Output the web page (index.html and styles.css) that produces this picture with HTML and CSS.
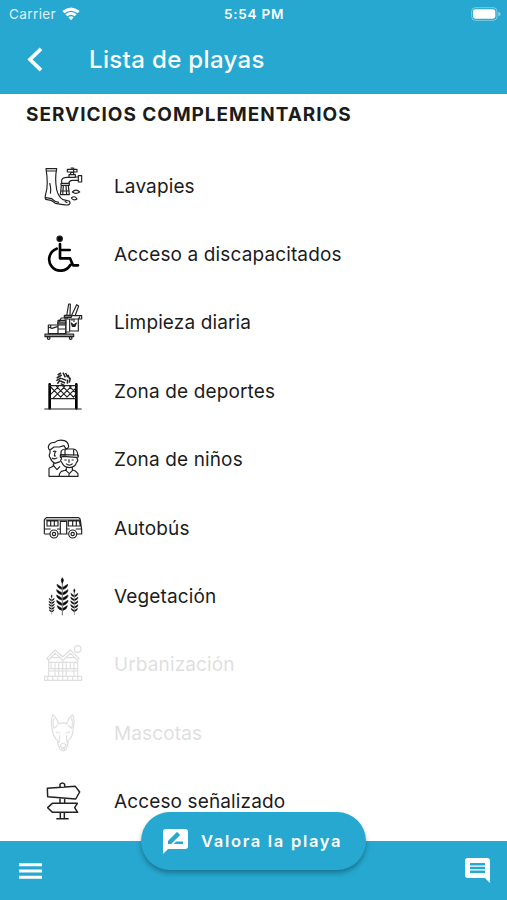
FILE: index.html
```html
<!doctype html>
<html lang="es">
  <head>
    <meta charset="UTF-8" />
    <meta name="viewport" content="width=device-width, initial-scale=1" />
    <title>Lista de playas</title>
    <link rel="stylesheet" href="styles.css">
  </head>
  <body>
    <div class="app">
      <header class="header">
        <div class="status">
          <div class="carrier">
            <span>Carrier</span>
            <svg class="wifi" viewBox="0 0 54 42">
              <path d="M1 12Q27-9 53 12L47 19Q27 3 7 19Z" />
              <path d="M10 22Q27 8 44 22L38 28Q27 19 16 28Z" />
              <path d="M19 31Q27 24 35 31L27 40Z" />
            </svg>
          </div>
          <span class="time">5:54 PM</span>
          <div class="battery-box">
            <svg class="battery" viewBox="0 0 90 42">
              <rect class="battery-case" x="2" y="2" width="76" height="38" rx="11" />
              <rect x="6" y="7" width="67" height="28" rx="7" />
              <path class="battery-tip" d="M82 14q7 2 7 7t-7 7z" />
            </svg>
          </div>
        </div>
        <div class="title-bar">
          <svg class="back" viewBox="0 0 48 74"><path d="M42 5L9 37L42 69" /></svg>
          <h1>Lista de playas</h1>
        </div>
      </header>

      <main class="content">
        <h2>SERVICIOS COMPLEMENTARIOS</h2>
        <ul class="services">
          <li>
            <svg class="icon" viewBox="39 31 120 120">
              <path d="M48 39H80Q74 70 80 102Q85 124 99 132L117 136Q122 140 119 145Q114 150 99 147L76 143L63 134L47 131Q44 127 47 115Q56 90 48 39ZM49 46H79M59 82Q64 99 61 114M47 126L65 129Q74 139 87 140M104 137L112 141" />
              <path d="M95 83V73Q98 65 111 65H117V57H136V64H145V60H155V79H145V74H126Q118 75 116 83ZM145 64V74M122 57V50H131V57M112 41H141V49H112ZM122 37H131V53M93 83H118V89H93ZM94 90L91 117H118L115 90M100 90L98 116M108 90L110 116M91 106H119M116 65H137" />
              <path d="M127 109Q138 98 149 109Q137 117 127 109ZM124 127Q134 118 141 130Q130 136 124 127Z" />
            </svg>
            <span>Lavapies</span>
          </li>
          <li>
            <svg class="icon" viewBox="39 26 120 120">
              <circle class="solid" cx="89" cy="40" r="8" />
              <path class="bold" d="M90 56V99H120L129 120H144M90 74H119M80 70A34 34 0 1 0 121 119" />
            </svg>
            <span>Acceso a discapacitados</span>
          </li>
          <li>
            <svg class="icon" viewBox="39 28 120 120">
              <path class="gray" d="M45 124H131V132H45Z" />
              <path d="M55 97H84V123H55ZM55 103L66 107L82 102M62 97V104M84 83H107V123H84ZM84 91H107M84 97H107M84 109H107M89 91V83L94 76H105M108 81V124M105 69H155V79H105ZM110 70L116 34H121L120 70M124 70L140 36L146 40L135 70M119 79H145V115H119ZM132 79V88M145 79L150 72M105 118H119M126 84V80M111 80V70" />
              <path class="solid" d="M124 91L131 98L139 91L135 101L127 101Z" />
              <path class="gray" d="M84 88H107V94H84ZM103 68H124V74H103Z" />
              <circle cx="56" cy="136" r="4" /><circle cx="122" cy="136" r="4" />
            </svg>
            <span>Limpieza diaria</span>
          </li>
          <li>
            <svg class="icon" viewBox="39 32 120 120">
              <path class="bold" d="M59 72V144M139 72V144" />
              <path d="M57 76H142M59 115H139M43 146H155M62 80L96 114M79 78L115 114M98 78L134 114M118 78L139 99M62 102L86 78M69 114L105 78M88 114L124 78M107 114L139 82M126 114L139 101" />
              <path class="ball" d="M83 44L93 38M80 53L95 44M79 61L93 53M82 70L90 60M94 54L109 60M91 62L105 68M99 37L106 51M107 38L113 51M114 43L119 56M121 52L118 67M113 58L112 70M92 70L103 75" />
            </svg>
            <span>Zona de deportes</span>
          </li>
          <li>
            <svg class="icon" viewBox="39 27 120 120">
              <path d="M60 61Q51 55 58 43Q64 36 73 38Q85 27 103 32Q114 35 116 49Q114 57 106 58M60 60L72 51H88L102 47L108 57M60 61V69Q55 78 61 84Q65 96 75 100L91 95M69 65Q74 61 79 66M75 66L73 78H78M66 84Q74 90 82 83M71 98V108L57 115V139H88M68 104L81 119L90 109" />
              <path d="M93 78V67Q93 58 107 57H130Q142 58 143 73V79M91 74L145 75V81L139 82L99 79L91 82ZM105 59V77M131 59V77M94 82V88Q89 91 96 98Q101 111 118 113Q137 111 139 98Q146 92 141 85V81M103 90H110M125 90H131M108 101Q118 110 128 101M117 88V98M109 113V120L94 124L88 132V139H144V131L136 123L127 119V112M105 119L118 131L130 119M117 132V139" />
            </svg>
            <span>Zona de niños</span>
          </li>
          <li>
            <svg class="icon" viewBox="39 28 120 120">
              <path d="M43 105V63L49 57H145Q151 58 151 64L155 93V106H139M113 106H85M60 106H43M47 64H150M91 66V106M110 66V106M91 68H110V105M51 67H84V82H51ZM62 67V82M73 67V82M115 67H148L151 82H115ZM128 67V82M139 67V82M43 91H62M81 91H91M110 91H119M137 91H154" />
              <circle cx="72" cy="106" r="12" /><circle cx="72" cy="106" r="5" />
              <circle cx="128" cy="106" r="12" /><circle cx="128" cy="106" r="5" />
            </svg>
            <span>Autobús</span>
          </li>
          <li>
            <svg class="icon wheat" viewBox="39 29 120 120">
              <defs>
                <g id="wheat">
                  <path d="M0 5V113" />
                  <path class="solid" d="M0 0Q7 7 0 17Q-7 7 0 0ZM-2 29L-16 20Q-16 31-2 35ZM2 29L16 20Q16 31 2 35ZM-2 45L-17 36Q-17 47-2 51ZM2 45L17 36Q17 47 2 51ZM-2 61L-17 52Q-17 63-2 67ZM2 61L17 52Q17 63 2 67ZM-2 77L-17 68Q-17 79-2 83ZM2 77L17 68Q17 79 2 83ZM-2 92L-15 84Q-15 94-2 98ZM2 92L15 84Q15 94 2 98Z" />
                </g>
              </defs>
              <use href="#wheat" transform="translate(97 34)" />
              <use href="#wheat" transform="translate(133 67) scale(.65 .7)" />
              <use href="#wheat" transform="translate(65 85) scale(.5 .53)" />
            </svg>
            <span>Vegetación</span>
          </li>
          <li class="off">
            <svg class="icon" viewBox="39 28 120 120">
              <path d="M50 71L76 46L98 67L121 46L147 71L142 76L121 56L99 77L76 56L55 76ZM56 76V124M98 77V124M143 76V124M63 69H90M108 69H135M57 83H143M57 102H143M57 109H143M63 86V100M75 86V123M86 86V123M109 86V123M121 86V100M132 86V123M44 125H155V137H44ZM53 126V136M68 126V136M83 126V136M98 126V136M113 126V136M128 126V136M143 126V136" />
              <circle cx="143" cy="43" r="10" />
            </svg>
            <span>Urbanización</span>
          </li>
          <li class="off">
            <svg class="icon" viewBox="39 29 120 120">
              <path d="M67 80Q60 50 69 34Q79 42 86 62Q98 55 110 62Q115 43 128 34Q136 52 129 79M73 43Q66 58 72 75L83 65M124 43Q130 58 125 75L113 65M67 79Q69 100 82 111Q84 128 90 137Q99 148 109 137Q113 128 115 111Q129 98 129 79M78 87Q84 84 90 90M107 90Q114 84 120 87M89 96L87 119M109 96L111 119M91 124Q99 117 108 124Q106 134 99 134Q92 134 91 124M93 139Q100 133 107 139" />
            </svg>
            <span>Mascotas</span>
          </li>
          <li>
            <svg class="icon" viewBox="39 234 120 120">
              <path class="sign" d="M90 254V244Q97 236 104 244V252M52 256L136 250L149 267L137 288L53 281ZM90 285V299M104 286V299M67 301H142L134 314L143 328H67L53 314ZM91 329V345M103 329V345M79 347H116" />
            </svg>
            <span>Acceso señalizado</span>
          </li>
        </ul>
      </main>

      <footer class="footer">
        <svg class="menu" viewBox="0 0 24 18"><path d="M0 1h24v3H0zM0 7.500h24v3H0zM0 14h24v3H0z" /></svg>
        <button class="rate">
          <svg viewBox="2 2 20 20">
            <path d="M20 2H4c-1.100 0-1.990.9-1.990 2L2 22l4-4h14c1.100 0 2-.9 2-2V4c0-1.100-.9-2-2-2zM6 14v-2.470l6.880-6.880c.2-.2.510-.2.710 0l1.770 1.770c.2.2.2.510 0 .71L8.470 14H6zm12 0h-7.500l2-2H18v2z" />
          </svg>
          <span>Valora la playa</span>
        </button>
        <svg class="comment" viewBox="2 2 20 20">
          <path d="M21.990 4c0-1.100-.89-2-1.990-2H4c-1.100 0-2 .9-2 2v12c0 1.100.9 2 2 2h14l4 4-.01-18zM18 14H6v-2h12v2zm0-3H6V9h12v2zm0-3H6V6h12v2z" />
        </svg>
      </footer>
    </div>
  </body>
</html>
```
FILE: styles.css
```css
* {
  box-sizing: border-box;
  margin: 0;
  padding: 0;
}
body {
  background: #fff;
  color: #1c1c1c;
  font-family: Inter, "Liberation Sans", sans-serif;
}
svg {
  display: block;
  flex-shrink: 0;
}
.app {
  height: 900px;
  display: flex;
  flex-direction: column;
  overflow: hidden;
}

.header {
  height: 93.5px;
  flex-shrink: 0;
  background: #26a8d0;
  color: #fff;
}
.status {
  height: 27px;
  padding: 0 6px 0 9px;
  display: grid;
  grid-template-columns: 215px auto 1fr;
  align-items: center;
  font-size: 13.5px;
}
.carrier {
  display: flex;
  align-items: center;
  gap: 6px;
  letter-spacing: 0.4px;
}
.carrier span {
  opacity: 0.85;
}
.wifi {
  width: 18px;
  height: 14px;
  fill: #fff;
}
.time {
  font-weight: 600;
  font-size: 13.5px;
  letter-spacing: 0.75px;
}
.battery-box {
  display: flex;
  justify-content: flex-end;
}
.battery {
  width: 30px;
  height: 14px;
  fill: #fff;
}
.battery .battery-case {
  fill: none;
  stroke: #fff;
  stroke-width: 3;
  opacity: 0.4;
}
.battery-tip {
  opacity: 0.45;
}
.title-bar {
  display: flex;
  align-items: center;
  height: 65px;
  padding-left: 27px;
}
.back {
  width: 16px;
  height: 25px;
  fill: none;
  stroke: #fff;
  stroke-width: 11;
}
.title-bar h1 {
  margin-left: 46px;
  font-size: 24px;
  font-weight: 500;
  letter-spacing: 0.35px;
}

.content {
  flex: 1;
  min-height: 0;
  overflow: hidden;
}
.content h2 {
  height: 58px;
  padding: 9px 0 0 26px;
  font-size: 19px;
  line-height: 24px;
  font-weight: 700;
  letter-spacing: 0.97px;
}
.services {
  list-style: none;
}
.services li {
  height: 68.4px;
  padding-left: 43px;
  display: flex;
  align-items: center;
  gap: 31px;
  font-size: 19px;
  letter-spacing: 0.13px;
}
.services li span {
  padding-top: 1px;
}
.services .off {
  opacity: 0.14;
}
.icon {
  width: 40px;
  height: 40px;
  fill: none;
  stroke: #222;
  stroke-width: 3.5;
  stroke-linejoin: round;
}
.icon .solid {
  fill: #000;
}
.icon .gray {
  fill: #999;
}
.icon .bold {
  stroke: #000;
  stroke-width: 8;
  stroke-linecap: round;
}
.icon .ball {
  stroke-width: 4.5;
}
.icon .sign {
  stroke-width: 4.5;
}
.icon.wheat {
  stroke-width: 2;
}

.footer {
  height: 59px;
  flex-shrink: 0;
  padding: 0 17px 0 19px;
  display: flex;
  justify-content: space-between;
  align-items: center;
  background: #26a8d0;
}
.footer svg {
  fill: #fff;
}
.menu {
  width: 23px;
  height: 18px;
}
.rate {
  width: 225px;
  height: 58px;
  margin-top: -59px;
  padding-left: 22px;
  border: 0;
  border-radius: 29px;
  display: flex;
  align-items: center;
  gap: 13px;
  background: #26a8d0;
  box-shadow: 0 3px 5px rgba(0, 0, 0, 0.3);
  color: #fff;
  font: 600 16.5px Inter, sans-serif;
  letter-spacing: 1.7px;
  white-space: nowrap;
}
.rate svg {
  width: 25px;
  height: 25px;
}
.comment {
  width: 25px;
  height: 25px;
}
```
